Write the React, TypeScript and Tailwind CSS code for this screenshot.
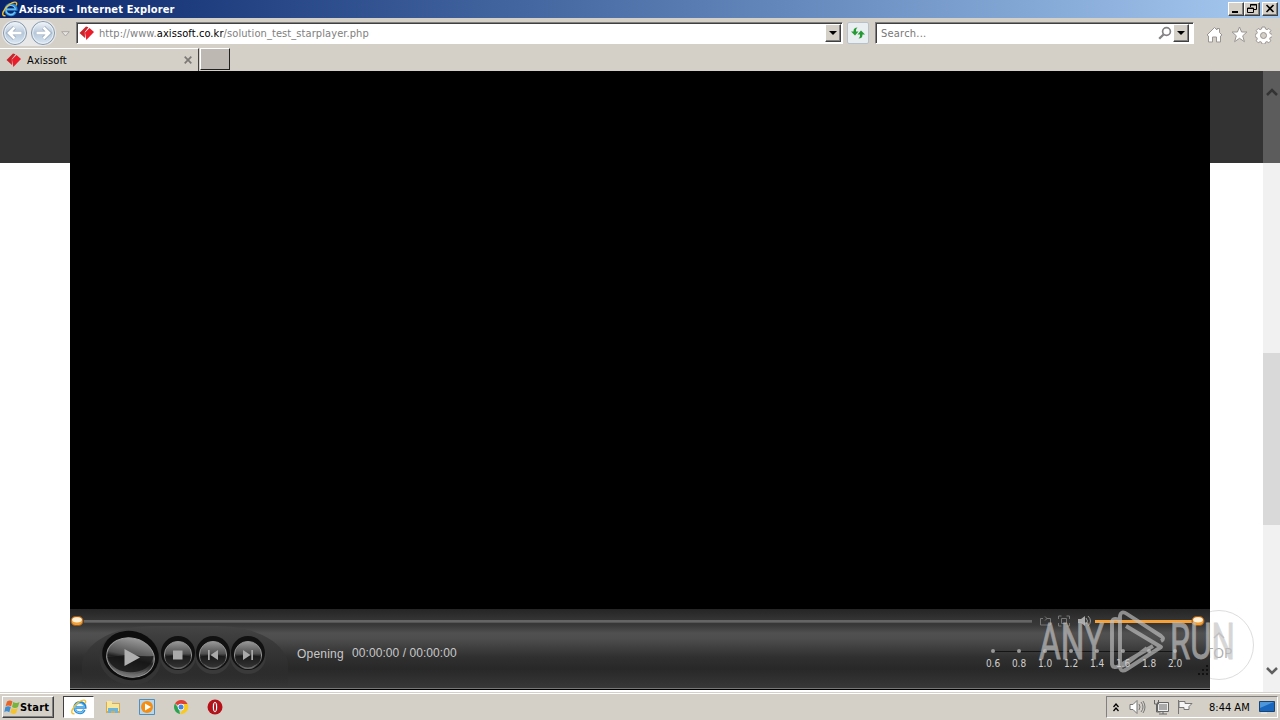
import type { ReactNode } from "react";

const tahoma = "font-['DejaVu_Sans_Condensed','DejaVu_Sans',sans-serif] [font-stretch:condensed]";
const raised =
  "bg-[#d4d0c8] border border-t-white border-l-white border-r-[#404040] border-b-[#404040] shadow-[inset_-1px_-1px_0_#808080]";

function IeLogo({ className }: { className?: string }) {
  return (
    <svg viewBox="0 0 16 16" className={className}>
      <path d="M13.300 10.700A5 5 0 0 1 3.700 9M3.700 8.500H14.200A5.200 5.200 0 0 0 3.700 8.500" fill="none" stroke="#2b86d0" strokeWidth="2.700" />
      <path d="M12.900 10.900A4.700 4.700 0 0 1 4 8.300H13.500A4.900 4.900 0 0 0 4 8" fill="none" stroke="#74c8f4" strokeWidth="1.100" />
      <path d="M3.500 14.700C-2 15.500 1.500 7.500 7.500 3.300 12 .2 16 .2 14.200 4.500" fill="none" stroke="#f2c230" strokeWidth="1.400" />
    </svg>
  );
}

function SiteMark() {
  return (
    <svg viewBox="0 0 16 16" className="h-4 w-4 shrink-0">
      <path d="M.5 8 7 1.500 9.500 2.300 5.800 7 6 13Z" fill="#c9242a" />
      <path d="M6 7.500 10.500 3 15 7 7.300 15Z" fill="#ea1c2a" />
    </svg>
  );
}

function NavCircle({ back }: { back?: boolean }) {
  return (
    <svg viewBox="0 0 26 26" className={`h-[26px] w-[26px] ${back ? "" : "-scale-x-100"}`}>
      <defs>
        <linearGradient id={back ? "navb" : "navf"} x1="0" y1="0" x2="0" y2="1">
          <stop offset="0" stopColor="#f4f7fa" />
          <stop offset=".5" stopColor="#b5c7da" />
          <stop offset="1" stopColor="#dce9f5" />
        </linearGradient>
      </defs>
      <circle cx="13" cy="13" r="11.500" fill={`url(#${back ? "navb" : "navf"})`} stroke="#8798aa" />
      <circle cx="13" cy="13" r="10.300" fill="none" stroke="#e8f0f7" />
      <path d="m12.500 7.500-5.500 5.500 5.500 5.500M7.500 13h12" fill="none" stroke="#91a3b6" strokeWidth="4.200" />
      <path d="m12.500 7.500-5.500 5.500 5.500 5.500M7.500 13h12" fill="none" stroke="#fff" strokeWidth="2.800" />
    </svg>
  );
}

function DropButton() {
  return (
    <div className={`flex h-[18px] w-4 items-center justify-center ${raised}`}>
      <svg viewBox="0 0 8 4" className="h-1 w-2"><path d="M0 0h8L4 4Z" fill="#000" /></svg>
    </div>
  );
}

function WinButton({ children, className = "" }: { children: ReactNode; className?: string }) {
  return (
    <div className={`h-[14px] w-4 ${raised} ${className}`}>
      <svg viewBox="0 0 14 12" className="h-3 w-[14px]" fill="none" stroke="#000">{children}</svg>
    </div>
  );
}

function TitleBar() {
  return (
    <div className="flex h-[18px] items-center bg-linear-to-r from-[#0a246a] to-[#a6caf0] pl-[2px] pr-[2px]">
      <IeLogo className="h-4 w-4" />
      <span className={`ml-[1px] mt-px whitespace-pre text-[11px] font-bold leading-[18px] tracking-[0.13px] text-white ${tahoma}`}>Axissoft - Internet Explorer</span>
      <div className="ml-auto flex">
        <WinButton><path d="M3 9h6" strokeWidth="2" /></WinButton>
        <WinButton><path d="M5.500 4V1.500h6v5H9M5 2h7M2.500 5h6v4.500h-6ZM2 5.500h7" /></WinButton>
        <WinButton className="ml-[2px]"><path d="m3.500 2 7 7m0-7-7 7" strokeWidth="1.600" /></WinButton>
      </div>
    </div>
  );
}

const sunken = "border border-[#808080] border-r-white border-b-white shadow-[inset_1px_1px_0_#404040] bg-white";

function Toolbar() {
  return (
    <div className="flex h-[30px] items-start bg-[#d4d0c8]">
      <div className="ml-[2px] mt-[2px] flex gap-[2px] rounded-full bg-[#e8e8e8]"><NavCircle back /><NavCircle /></div>
      <svg viewBox="0 0 9 6" className="ml-[5px] mt-[13px] h-[6px] w-[9px]"><path d="M.7.700h7.600L4.500 5Z" fill="#e7e5e1" stroke="#aaa7a2" /></svg>
      <div className={`ml-[6px] mt-1 flex h-[22px] w-[767px] items-center pl-[2px] pr-[1px] ${sunken}`}>
        <SiteMark />
        <span className={`ml-1 mt-[2px] whitespace-pre text-[11px] leading-4 tracking-[0.09px] text-[#808080] ${tahoma}`}>http://www.<span className="text-black">axissoft.co.kr</span>/solution_test_starplayer.php</span>
        <div className="ml-auto"><DropButton /></div>
      </div>
      <div className="ml-1 mt-1 flex h-[22px] w-[22px] items-center justify-center rounded-[2px] border border-[#b8c1c9] bg-[#e9eef0]">
        <svg viewBox="0 0 16 16" className="h-4 w-4">
          <path d="M7.500 2.500C5 2.500 3.500 3.500 3.500 6.500H1l4 4 3.500-4H6c0-2 0-2.500 1.500-4ZM8.500 13.500c2.500 0 4-1 4-4H15l-4-4-3.500 4H10c0 2 0 2.500-1.500 4Z" fill="#239a32" />
        </svg>
      </div>
      <div className={`ml-[6px] mt-1 flex h-[22px] w-[319px] items-center pl-[5px] pr-[4px] ${sunken}`}>
        <span className={`mt-[2px] text-[11px] leading-4 tracking-[0.22px] text-[#777] ${tahoma}`}>Search...</span>
        <svg viewBox="0 0 14 14" className="ml-auto mr-[1px] h-[14px] w-[14px]" fill="none" stroke="#858285"><circle cx="8.500" cy="5.500" r="3.900" strokeWidth="1.700" /><path d="m5.500 8.500-4.300 4.300" strokeWidth="2.300" /></svg>
        <DropButton />
      </div>
      <div className="ml-[12px] mt-[8px] flex gap-[8px]">
        <svg viewBox="0 0 17 18" className="h-[18px] w-[17px]"><path d="M1 9 8.500 1.500 11 4V2.500h2.500v4L16 9l-1.500 1v6h-4v-5h-4v5h-4v-6Z" fill="#fff" stroke="#999591" /></svg>
        <svg viewBox="0 0 17 18" className="h-[18px] w-[17px]"><path d="m8.500 1 2.100 5h5.300l-4.200 3.800 1.700 5.900-4.900-3.400-4.900 3.400 1.700-5.900L1.100 6h5.300Z" fill="#fff" stroke="#999591" /></svg>
        <svg viewBox="0 0 17 18" className="-ml-px h-[18px] w-[17px]">
          <path d="M7 1h3l.5 2 1.500.6 1.900-1.100 2 2-1.200 1.900.6 1.400 2 .5v2.600l-2 .5-.6 1.500 1.100 1.900-2 2-1.900-1.200-1.400.6-.5 1.800H7l-.5-1.800-1.400-.6-1.900 1.200-2-2 1.100-1.900-.6-1.500-1.500-.5V8.300l1.500-.5.6-1.400-1.100-1.900 2-2 1.900 1.100L6.500 3Z" fill="#fff" stroke="#999591" />
          <circle cx="8.500" cy="9.500" r="3" fill="#d4d0c8" stroke="#999591" />
        </svg>
      </div>
    </div>
  );
}

function TabStrip() {
  return (
    <div className="flex h-[23px] bg-[#d4d0c8]">
      <div className="flex w-[199px] items-center border-t border-r border-t-white border-r-[#404040] pl-[6px] pr-[6px]">
        <SiteMark />
        <span className={`ml-[5px] mt-px text-[11px] leading-4 tracking-[0.12px] text-black ${tahoma}`}>Axissoft</span>
        <svg viewBox="0 0 8 8" className="ml-auto h-2 w-2"><path d="m.7.700 6.600 6.600m0-6.600L.7 7.300" stroke="#7c7975" strokeWidth="1.700" /></svg>
      </div>
      <div className="ml-px h-[22px] w-[30px] border border-t-white border-l-white border-r-[#202020] border-b-[#202020] bg-[#bdb9b2]" />
    </div>
  );
}

function RoundButton({ kind }: { kind: "stop" | "prev" | "next" }) {
  return (
    <svg viewBox="0 0 38 46" className="-mr-[3px] h-[46px] w-[38px]">
      <ellipse cx="19" cy="24" rx="18" ry="18" fill="#3a3a3a" />
      <circle cx="19" cy="21" r="17" fill="#111" />
      <circle cx="19" cy="23" r="13.600" fill="url(#glass)" stroke="#929292" />
      <path d="M6 25q13-4 26 0c-1 16-25 16-26 0" fill="#191919" opacity=".7" />
      <path d="M9 31q10 9 20 0-4 6-10 6T9 31" fill="#888" opacity=".6" />
      <g fill="#aaa" transform="translate(0 1)">
        {kind === "stop" && <path d="M14 17.500h9.500v9H14Z" />}
        {kind === "prev" && <path d="M14 17h1.700v10H14ZM24 17v10l-7.500-5Z" />}
        {kind === "next" && <path d="M22.300 17H24v10h-1.700ZM14 17v10l7.500-5Z" />}
      </g>
    </svg>
  );
}

function Knob({ className = "" }: { className?: string }) {
  return (
    <svg viewBox="0 0 14 10" className={`h-[10px] w-[14px] shrink-0 ${className}`}>
      <rect x="1" y=".5" width="12" height="9" rx="4.500" fill="#f0a03a" stroke="#9b5a1c" />
      <ellipse cx="7" cy="3.800" rx="4.800" ry="2.600" fill="#fff0d8" />
    </svg>
  );
}

const speeds = ["0.6", "0.8", "1.0", "1.2", "1.4", "1.6", "1.8", "2.0"];

function Player() {
  return (
    <div className="flex h-[619px] w-[1140px] shrink-0 flex-col bg-black">
      <div className="h-[538px]" />
      <div className="flex h-[80px] flex-col border-b border-[#777] bg-[linear-gradient(180deg,#252525_0,#333_10px,#383838_16px,#505050_24px,#4d4d4d_30px,#303030_48px,#282828_60px,#383838_80px)]">
        <div className="mt-[7px] flex h-[10px] items-center">
          <Knob />
          <div className="h-[3px] w-[948px] border-b border-[#555] bg-[#656565]" />
          <svg viewBox="0 0 54 14" className="ml-[7px] h-[14px] w-[54px]" fill="none" stroke="#777">
            <path d="M4 4.500H1.500v6.500h10V4.500H7.500M6 6.500l2-2-2-2M19.500 5V2h3m5 0h3v3m0 4v3h-3m-5 0h-3V9M22.500 4.500h5v5h-5Z" />
            <path d="M39 5h3l4-3v10l-4-3h-3Z" fill="#aaa" stroke="none" /><path d="M47 4q3 3 0 6m2-8q5 5 0 10" stroke="#999" />
          </svg>
          <div className="ml-[2px] h-[3px] w-[97px] bg-[#f6a137]" />
          <Knob className="-ml-[1px]" />
        </div>
        <div className="flex h-[61px]">
          <div className="ml-3 flex h-[61px] w-[206px] rounded-t-[70px_40px] bg-[linear-gradient(180deg,#444_0,#383838_20px,#2d2d2d_42px,transparent)] pl-1 pt-px">
            <svg viewBox="12 0 76 60" className="h-[60px] w-[76px] shrink-0">
              <defs>
                <linearGradient id="glass" x1="0" y1="0" x2="0" y2="1"><stop offset="0" stopColor="#999" /><stop offset=".45" stopColor="#505050" /><stop offset=".55" stopColor="#202020" /><stop offset="1" stopColor="#777" /></linearGradient>
              </defs>
              <ellipse cx="56" cy="31.500" rx="31" ry="26.500" fill="#353535" transform="rotate(14 56 31.500)" />
              <ellipse cx="56.500" cy="28.500" rx="28.500" ry="24.500" fill="#0d0d0d" transform="rotate(14 56.500 28.500)" />
              <ellipse cx="56.500" cy="30.500" rx="24" ry="19.500" fill="url(#glass)" stroke="#999" transform="rotate(12 56.500 30.500)" />
              <path d="M33.500 30c12 0 17-3 26-2q10 2 20 1c-2 21-41 22-46 1" fill="#151515" opacity=".8" />
              <path d="M38 40.500q18 13 36 2-7 8-17 8-12-1-19-10" fill="#777" opacity=".6" />
              <path d="m50.500 22 15.500 8.500L50.500 39Z" fill="#b0b0b0" />
            </svg>
            <div className="-ml-[3px] mt-[5px] flex"><RoundButton kind="stop" /><RoundButton kind="prev" /><RoundButton kind="next" /></div>
          </div>
          <span className="ml-[9px] mt-[20px] w-[47px] whitespace-pre font-['Liberation_Sans',sans-serif] text-[12px] leading-[17px] tracking-[0.2px] text-[#c8c8c8]">Opening</span>
          <span className="ml-[8px] mt-[19px] whitespace-pre font-['Liberation_Sans',sans-serif] text-[12px] leading-[17px] tracking-[0.07px] text-[#c8c8c8]">00:00:00 / 00:00:00</span>
          <div className="ml-auto mr-[23px] mt-[22px] h-6 w-[208px]">
            <div className="mx-[13px] mt-[3px] h-px bg-[#151515]" />
            <div className="-mt-[3px] flex">
              {speeds.map((s) => (
                <div key={s} className="flex w-[26px] flex-col items-center">
                  <i className="h-[4px] w-[4px] rounded-full bg-[#999]" />
                  <span className={`mt-[4px] text-[10px] leading-[14px] tracking-[-0.05px] text-[#d0d0d0] ${tahoma}`}>{s}</span>
                </div>
              ))}
            </div>
          </div>
          <svg viewBox="0 0 12 12" className="-ml-[13px] mt-[39px] h-3 w-3" fill="#111"><path d="M8 0h2v2H8ZM4 4h2v2H4ZM8 4h2v2H8ZM0 8h2v2H0ZM4 8h2v2H4ZM8 8h2v2H8Z" /></svg>
        </div>
      </div>
    </div>
  );
}

function Watermark() {
  return (
    <svg viewBox="0 0 250 90" className="absolute left-[1030px] top-[532px] h-[90px] w-[250px]">
      <g fill="#c3c3c3" stroke="#c3c3c3" strokeWidth=".9" opacity=".68" className="font-['Roboto',sans-serif] font-normal" fontSize="50">
        <text x="9" y="56" textLength="65" lengthAdjust="spacingAndGlyphs">ANY</text>
        <text x="140" y="56" textLength="65" lengthAdjust="spacingAndGlyphs">RUN</text>
      </g>
      <path d="m117 45-21 16q-5 4-6-1V13q1-6 7-2l34 22q4 3 0 5M89 17q-6-3-7 2v42q1 5 7 2l34-20M96 23l35 21-34 22q-6 4-7-2" fill="none" stroke="#c3c3c3" strokeOpacity=".65" strokeWidth="3.900" strokeLinejoin="round" />
    </svg>
  );
}

function Page() {
  return (
    <div className="relative flex h-[621px] bg-[linear-gradient(180deg,#333_92px,#fff_92px)]">
      <div className="ml-[70px] flex"><Player /></div>
      <div className="relative h-full w-[53px] overflow-hidden">
        <div className="absolute -left-[26px] top-[539px] flex h-[70px] w-[70px] flex-col items-center rounded-full border border-[#ddd] bg-white pt-[20px] font-['Open_Sans',sans-serif] text-[14px] leading-5 text-[#aaa]">
          <svg viewBox="0 0 12 8" className="h-2 w-3" fill="none" stroke="#bbb" strokeWidth="1.500"><path d="m1 7 5-5 5 5" /></svg>
          <span className="mt-[4px]">TOP</span>
        </div>
      </div>
      <div className="flex w-[17px] flex-col items-center bg-[linear-gradient(180deg,#5c5c5c_92px,#f1f1f1_92px)]">
        <svg viewBox="0 0 12 8" className="mt-[17px] h-2 w-3"><path d="m1 7 5-5 5 5" fill="none" stroke="#333" strokeWidth="2.500" /></svg>
        <div className="mt-[257px] h-[172px] w-full bg-[#d9d9d9]" />
        <svg viewBox="0 0 12 8" className="mt-[142px] h-2 w-3"><path d="m1 1 5 5 5-5" fill="none" stroke="#606060" strokeWidth="2.500" /></svg>
      </div>
      <Watermark />
    </div>
  );
}

function Taskbar() {
  return (
    <div className="flex h-[28px] items-end border-t border-[#d4d0c8] bg-[#d4d0c8] pb-[2px] shadow-[inset_0_1px_0_#fff]">
      <div className={`ml-[2px] flex h-[22px] w-[52px] items-center pl-[1px] ${raised}`}>
        <svg viewBox="0 0 16 16" className="h-4 w-4 shrink-0">
          <path d="M3 2.500q3-2 5.500 0L7 7.500Q4 5.500 1.500 7.500Z" fill="#e66428" /><path d="M9.300 3q3 2 6.200 0L14 8q-3 2-6 0Z" fill="#78b43c" />
          <path d="M1.300 8.300q3-2 5.500 0l-1.500 5q-3-2-5 0Z" fill="#408cd0" /><path d="M7.700 9q3 2 6 0l-1.500 5q-3 2-6-.500Z" fill="#f5c32d" />
        </svg>
        <span className={`mt-px text-[11px] font-bold leading-4 tracking-[0.2px] text-black ${tahoma}`}>Start</span>
      </div>
      <div className="ml-[9px] flex h-[22px] w-[31px] items-center justify-center border border-[#404040] border-r-white border-b-white bg-white"><IeLogo className="ml-px h-4 w-4" /></div>
      <div className="ml-[11px] flex h-[22px] items-center gap-[18px]">
        <svg viewBox="0 0 16 16" className="h-4 w-4"><path d="M1 3h5l1 1h8v10H1Z" fill="#d9ac4b" /><path d="M2 2h5v3h7v7H2Z" fill="#f8e69b" /><path d="M3 14V9h10v5h-3v-2H6v2Z" fill="#69b5dd" /></svg>
        <svg viewBox="0 0 16 16" className="h-4 w-4"><path d="M.5.500h15v15H.5Z" fill="#b7d7ee" stroke="#4f8fbd" /><circle cx="8" cy="8" r="6" fill="#f48d12" /><path d="m6 4.500 6 3.500-6 3.500Z" fill="#fff" /></svg>
        <svg viewBox="0 0 16 16" className="h-4 w-4"><path d="M8 8 2 4.500A7 7 0 0 1 14.500 5H8Z" fill="#df4234" /><path d="M2 4.500 6 10l1 5A7 7 0 0 1 2 4.500" fill="#2ca44f" /><path d="M8 5h6.500A7 7 0 0 1 7 15l4-6Z" fill="#f8c91e" /><circle cx="8" cy="8" r="3.200" fill="#fff" /><circle cx="8" cy="8" r="2.500" fill="#4285e5" /></svg>
        <svg viewBox="0 0 16 16" className="h-4 w-4"><circle cx="8" cy="8" r="7.500" fill="#b71018" /><ellipse cx="8" cy="8" rx="2.700" ry="5.500" fill="#fff" stroke="#760911" strokeWidth=".7" /><ellipse cx="8" cy="8" rx="1" ry="4.300" fill="#b71018" /></svg>
      </div>
      <div className="ml-auto mr-[2px] flex h-[22px] w-[172px] items-center border border-t-[#808080] border-l-[#808080] border-r-white border-b-white">
        <svg viewBox="0 0 6 9" className="ml-[6px] h-[9px] w-[6px]" fill="none" stroke="#000" strokeWidth="1.300"><path d="m.5 4 2.500-3 2.500 3m-5 4L3 5l2.500 3" /></svg>
        <svg viewBox="0 0 17 16" className="ml-[10px] h-4 w-[17px]" fill="none" stroke="#777"><path d="M1 5.500h3l4-4v13l-4-4H1Z" fill="#fff" /><path d="M10 5q2 3 0 6m2-8q4 5 0 10m2-11q4 6 0 12" /></svg>
        <svg viewBox="0 0 17 16" className="ml-[7px] h-4 w-[17px]" fill="#eee" stroke="#666"><path d="M4.500 3.500h11v9h-11ZM6 15h8M10 12v3" /><path d="M6 5h8v6H6Z" fill="#aaa" stroke="none" /><path d="M1.500 1v4h4V1M3.500 5v8h4" fill="none" /></svg>
        <svg viewBox="0 0 16 16" className="ml-[7px] h-4 w-4" fill="#f5f5f5" stroke="#777"><path d="M1.500 1v14M2 2.500h6v2h7l-3 3v3H7v-2H2Z" /></svg>
        <span className={`ml-[16px] mt-px whitespace-pre text-[11px] leading-4 tracking-[0px] text-black ${tahoma}`}>8:44 AM</span>
        <svg viewBox="0 0 16 14" className="ml-[9px] h-[14px] w-4"><path d="M.5 1.500h15v10H.5Z" fill="#1866bd" stroke="#184474" /><path d="M1 2h14L1 8Z" fill="#4d96dc" /><path d="M2 13h6" stroke="#eee" /></svg>
      </div>
    </div>
  );
}

export default function App() {
  return (
    <div className="flex h-[720px] w-[1280px] flex-col overflow-hidden bg-[#d4d0c8]">
      <TitleBar />
      <Toolbar />
      <TabStrip />
      <Page />
      <Taskbar />
    </div>
  );
}
